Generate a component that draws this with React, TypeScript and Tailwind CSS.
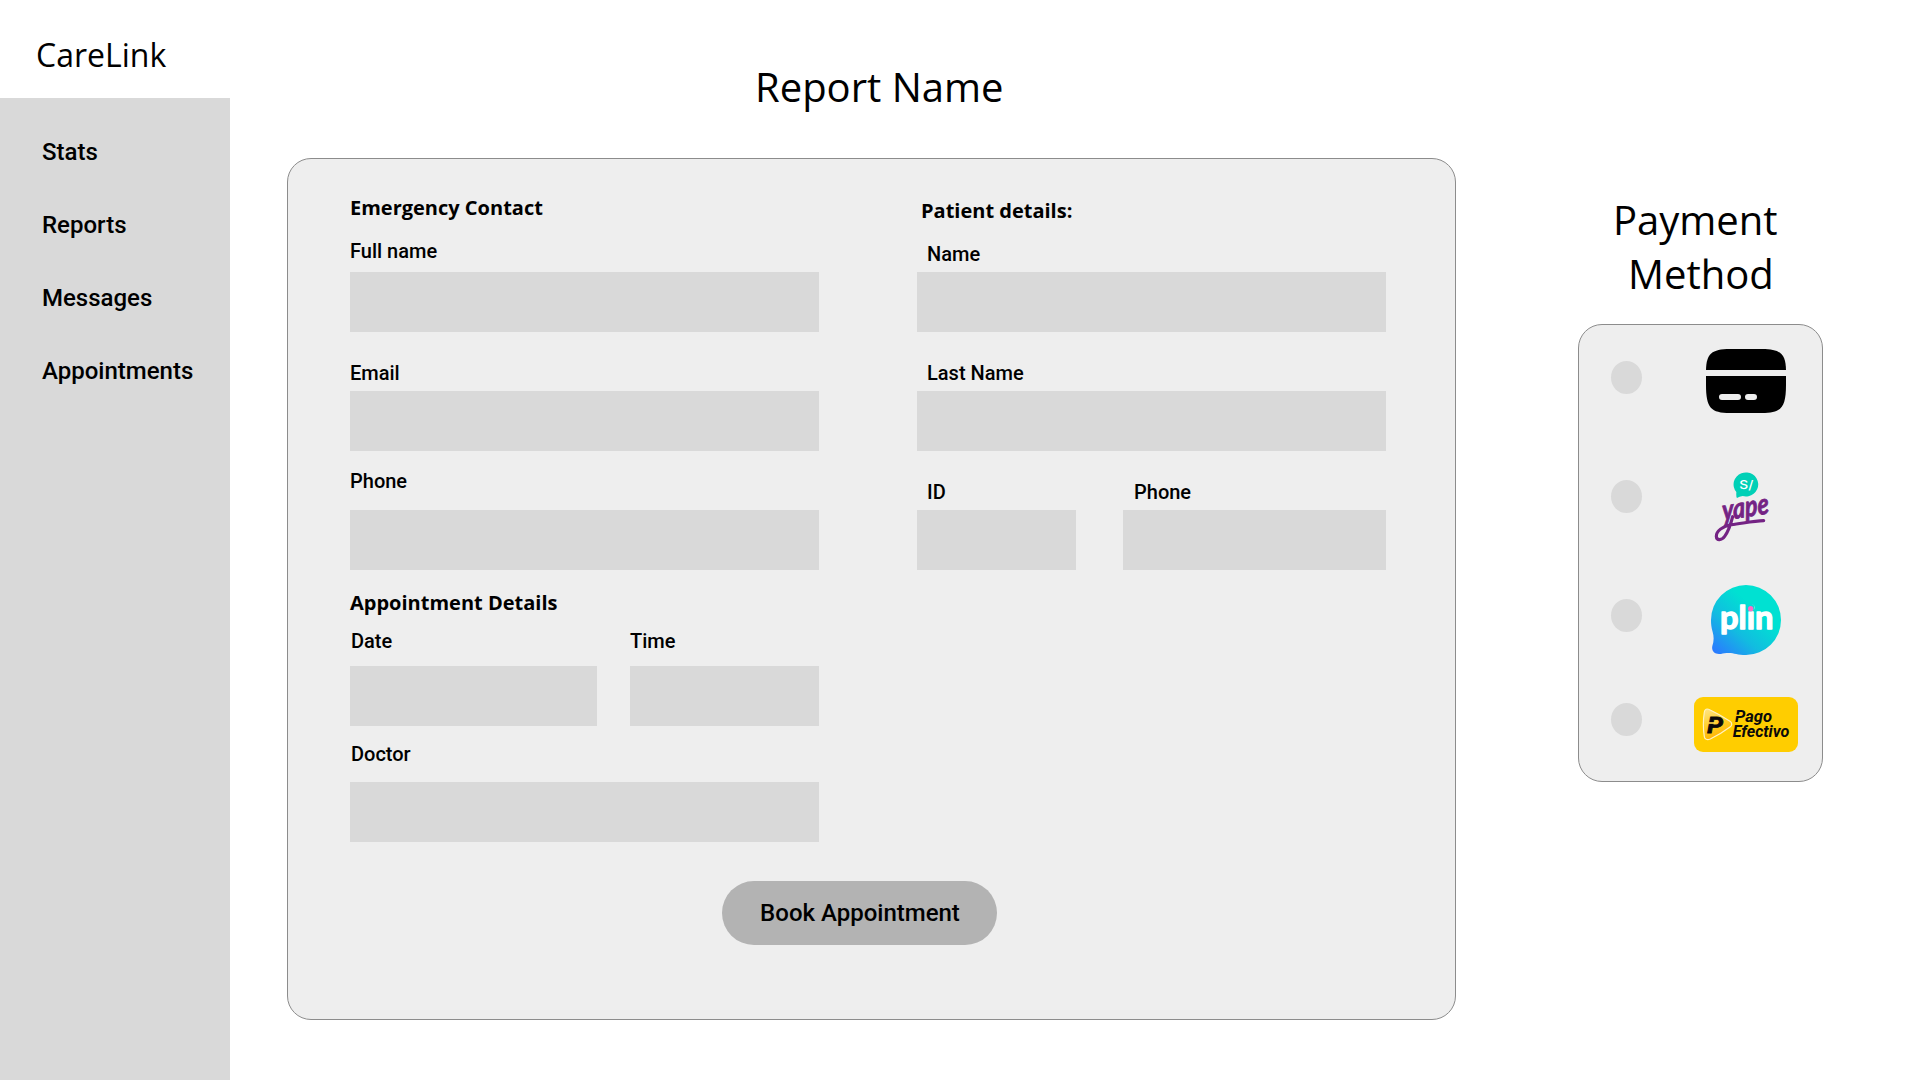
import type { ReactNode } from "react";

const NAV_ITEMS = ["Stats", "Reports", "Messages", "Appointments"];

function Field({
  label,
  className = "",
  labelClass = "",
  gapClass = "mt-1.5",
}: {
  label: string;
  className?: string;
  labelClass?: string;
  gapClass?: string;
}) {
  return (
    <label className={`block ${className}`}>
      <span className={`block text-[20px] leading-6 font-medium whitespace-nowrap ${labelClass}`}>{label}</span>
      <input className={`block h-[60px] w-full bg-[#d9d9d9] outline-none ${gapClass}`} />
    </label>
  );
}

function SectionTitle({ children, className = "" }: { children: ReactNode; className?: string }) {
  return (
    <h2 className={`font-['Open_Sans',sans-serif] text-[20px] leading-[30px] font-bold whitespace-nowrap ${className}`}>
      {children}
    </h2>
  );
}

function CardIcon() {
  return (
    <svg width="80" height="64" viewBox="0 0 80 64" className="block" aria-hidden="true">
      <path d="M0 21C.4 5 5.500 0 24 0H56C74.500 0 79.600 5 80 21Z" fill="#000" />
      <path
        fillRule="evenodd"
        d="M0 27H80V36C80 59 75 64 56 64H24C5 64 0 59 0 36ZM16 45A3 3 0 0 0 16 51H32A3 3 0 0 0 32 45ZM42 45A3 3 0 0 0 42 51H48A3 3 0 0 0 48 45Z"
        fill="#000"
      />
    </svg>
  );
}

function YapeLogo() {
  return (
    <svg width="90" height="75" viewBox="3 30 270 225" className="block" aria-label="yape">
      <path d="M109 96A37 36 0 1 1 128 108Q118 109 111 114Q108 112 109 96Z" fill="#00d0b6" />
      <text x="118" y="88" fontSize="36" fill="#fff" textLength="42" lengthAdjust="spacingAndGlyphs" className="font-['Inter',sans-serif] font-medium">
        S/
      </text>
      <g fill="#742384" stroke="#742384">
        <text
          transform="translate(69 182) rotate(-9) skewX(-4)"
          fontSize="86"
          strokeWidth="2.500"
          strokeLinejoin="round"
          textLength="141"
          lengthAdjust="spacingAndGlyphs"
          className="font-['Lato',sans-serif] font-bold italic"
        >
          yape
        </text>
        <path
          d="M191 182C160 183 128 190 94 194C68 198 48 214 49 229C50 243 65 241 74 229C84 216 92 194 98 170"
          fill="none"
          strokeWidth="9.500"
          strokeLinecap="round"
          strokeLinejoin="round"
        />
      </g>
    </svg>
  );
}

function PlinLogo() {
  return (
    <svg width="90" height="74" viewBox="3 24 270 222" className="block" aria-label="plin">
      <defs>
        <linearGradient id="plin" gradientUnits="userSpaceOnUse" x1="42" y1="228" x2="160" y2="95">
          <stop offset="0" stopColor="#2a7bff" />
          <stop offset="0.500" stopColor="#12bce0" />
          <stop offset="1" stopColor="#00e1d2" />
        </linearGradient>
      </defs>
      <path
        d="M138 30A105 105 0 1 1 138 240C110 240 100 232 80 234C70 235 66 237 57 237C42 237 34 226 37 213C42 199 42 185 38 171C34 158 33 147 33 135A105 105 0 0 1 138 30Z"
        fill="url(#plin)"
      />
      <text
        x="60"
        y="162"
        fontSize="98"
        fill="#fff"
        stroke="#fff"
        strokeWidth="4"
        strokeLinejoin="round"
        textLength="160"
        lengthAdjust="spacingAndGlyphs"
        className="font-['Lato',sans-serif] font-bold"
      >
        plin
      </text>
      <circle cx="151.600" cy="97.500" r="11.500" fill="#03dbd5" />
      <circle cx="152" cy="101" r="8" fill="#fb6dc8" />
    </svg>
  );
}

function PagoEfectivoLogo() {
  return (
    <svg width="104" height="55" viewBox="27 21 312 165" className="block" aria-label="Pago Efectivo">
      <defs>
        <linearGradient id="pago" x1="0" y1="0" x2="0.300" y2="1">
          <stop offset="0" stopColor="#ffe58a" />
          <stop offset="0.550" stopColor="#ffd02a" />
          <stop offset="1" stopColor="#ffb400" />
        </linearGradient>
      </defs>
      <rect x="27" y="21" width="312" height="165" rx="27" fill="#ffcd00" />
      <path
        d="M58 66C59 57 66 55 74 59C96 69 116 81 135 94C142 99 142 106 135 111C116 125 97 137 76 147C66 151 59 148 58 140C54 115 54 91 58 66Z"
        fill="url(#pago)"
        stroke="#fff3c4"
        strokeWidth="3.500"
      />
      <g className="font-['Roboto',sans-serif] font-bold italic" fill="#0a0a0a">
        <text x="67" y="129" fontSize="65" stroke="#0a0a0a" strokeWidth="2.500" textLength="47" lengthAdjust="spacingAndGlyphs">
          P
        </text>
        <text x="150" y="97" fontSize="47" textLength="111" lengthAdjust="spacingAndGlyphs">
          Pago
        </text>
        <text x="143" y="142" fontSize="47" textLength="170" lengthAdjust="spacingAndGlyphs">
          Efectivo
        </text>
      </g>
      <path d="M70 99H91" stroke="#ffd64a" strokeWidth="5" />
      <path d="M152 76H165" stroke="#ffcd00" strokeWidth="4" />
    </svg>
  );
}

function PaymentOption({
  children,
  className = "",
  radioClass,
}: {
  children: ReactNode;
  className?: string;
  radioClass: string;
}) {
  return (
    <label className={`flex items-start ${className}`}>
      <input
        type="radio"
        name="payment"
        className={`block h-[33px] w-[31px] shrink-0 appearance-none rounded-[50%] bg-[#d9d9d9] ${radioClass}`}
      />
      <span className="ml-[52px] flex w-[104px] justify-center">{children}</span>
    </label>
  );
}

export default function App() {
  return (
    <div className="flex h-[1080px] w-[1920px] overflow-hidden bg-white font-['Roboto',sans-serif] text-black">
      <aside className="flex w-[230px] shrink-0 flex-col">
        <div className="h-[98px] pt-[33px] pl-[36px] font-['Open_Sans',sans-serif] text-[32px] leading-[44px]">CareLink</div>
        <nav className="flex flex-1 flex-col gap-[45px] bg-[#d9d9d9] pt-10 pl-[42px]">
          {NAV_ITEMS.map((item) => (
            <a key={item} className="text-[24px] leading-7 font-medium">
              {item}
            </a>
          ))}
        </nav>
      </aside>

      <main className="ml-[57px] flex w-[1169px] shrink-0 flex-col">
        <h1 className="mt-[60px] ml-[468px] font-['Open_Sans',sans-serif] text-[40px] leading-[54px]">Report Name</h1>
        <form className="mt-11 h-[862px] rounded-[24px] border border-[#8c8c8c] bg-[#eeeeee] pt-[34px] pl-[62px]">
          <div className="flex gap-[98px]">
            <div className="w-[469px]">
              <SectionTitle>Emergency Contact</SectionTitle>
              <Field label="Full name" className="mt-4" gapClass="mt-[9px]" />
              <Field label="Email" className="mt-[29px]" />
              <Field label="Phone" className="mt-[18px]" gapClass="mt-[17px]" />
              <SectionTitle className="mt-[18px]">Appointment Details</SectionTitle>
              <div className="mt-[11px] flex gap-[33px]">
                <Field label="Date" className="w-[247px]" labelClass="pl-px" gapClass="mt-[13px]" />
                <Field label="Time" className="w-[189px]" gapClass="mt-[13px]" />
              </div>
              <Field label="Doctor" className="mt-4" labelClass="pl-px" gapClass="mt-4" />
            </div>
            <div className="w-[469px] pt-[3px]">
              <SectionTitle className="pl-1">Patient details:</SectionTitle>
              <Field label="Name" className="mt-4" labelClass="pl-[10px]" />
              <Field label="Last Name" className="mt-[29px]" labelClass="pl-[10px]" />
              <div className="mt-[29px] flex gap-[47px]">
                <Field label="ID" className="w-[159px]" labelClass="pl-[10px]" />
                <Field label="Phone" className="w-[263px]" labelClass="pl-[11px]" />
              </div>
            </div>
          </div>
          <button
            type="button"
            className="mt-[39px] ml-[372px] flex h-16 w-[275px] items-center justify-center rounded-[32px] bg-[#b3b3b3] pl-px text-[24px] leading-7 font-medium"
          >
            Book Appointment
          </button>
        </form>
      </main>

      <section className="ml-[122px] w-[245px] shrink-0 pt-[193px]">
        <h2 className="font-['Open_Sans',sans-serif] text-[40px] leading-[54px]">
          <span className="block pl-[35px]">Payment</span>
          <span className="block pl-[50px]">Method</span>
        </h2>
        <div className="mt-[23px] h-[458px] rounded-[24px] border border-[#8c8c8c] bg-[#eeeeee] pt-6 pl-8">
          <PaymentOption radioClass="mt-3">
            <CardIcon />
          </PaymentOption>
          <PaymentOption className="mt-[57px]" radioClass="mt-[10px]">
            <YapeLogo />
          </PaymentOption>
          <PaymentOption className="mt-[38px]" radioClass="mt-4">
            <PlinLogo />
          </PaymentOption>
          <PaymentOption className="mt-10" radioClass="mt-1.5">
            <PagoEfectivoLogo />
          </PaymentOption>
        </div>
      </section>
    </div>
  );
}
